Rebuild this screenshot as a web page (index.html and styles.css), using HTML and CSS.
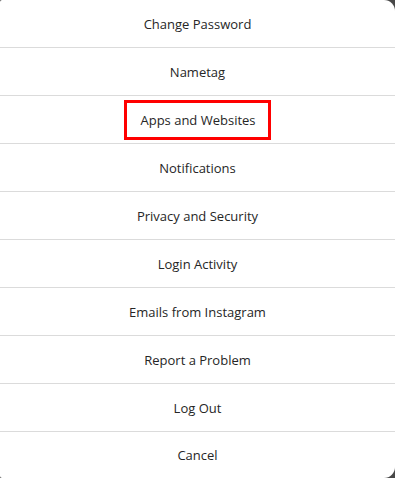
FILE: index.html
```html
<!DOCTYPE html>
<html lang="en">
<head>
<meta charset="UTF-8">
<meta name="viewport" content="width=device-width, initial-scale=1.0">
<title>Settings menu</title>
<link rel="stylesheet" href="styles.css">
</head>
<body>
<div class="dialog">
  <button class="item">Change Password</button>
  <button class="item">Nametag</button>
  <button class="item"><span class="marked">Apps and Websites</span></button>
  <button class="item">Notifications</button>
  <button class="item">Privacy and Security</button>
  <button class="item">Login Activity</button>
  <button class="item">Emails from Instagram</button>
  <button class="item">Report a Problem</button>
  <button class="item">Log Out</button>
  <button class="item last">Cancel</button>
</div>
</body>
</html>
```

FILE: styles.css
```css
html, body {
  margin: 0;
  padding: 0;
  height: 100%;
  background-color: #484848;
  overflow: hidden;
}
.dialog {
  display: flex;
  flex-direction: column;
  width: 395px;
  height: 478px;
  background: #ffffff;
  border-radius: 2px 11px 11px 2px;
  overflow: hidden;
}
.item {
  flex: 0 0 48px;
  display: flex;
  align-items: center;
  justify-content: center;
  margin: 0;
  padding: 0;
  border: none;
  border-bottom: 1px solid #dbdbdb;
  background: none;
  font-family: "Open Sans", "Noto Sans", sans-serif;
  font-size: 13px;
  color: #262626;
  cursor: pointer;
  box-sizing: border-box;
}
.item.last {
  border-bottom: none;
  flex: 0 0 46px;
}
.marked {
  display: inline-block;
  border: 3px solid #ff0000;
  padding: 8px 12px 8px 13px;
}
```
